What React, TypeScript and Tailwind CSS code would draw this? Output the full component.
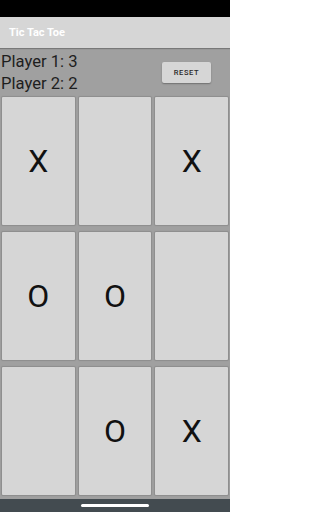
import React, { useState } from 'react'

type Mark = 'X' | 'O' | ''

const App: React.FC = () => {
  const [board, setBoard] = useState<Mark[]>(['X', '', 'X', 'O', 'O', '', '', 'O', 'X'])
  const [scores] = useState({ p1: 3, p2: 2 })

  return (
    <div className="w-[230px] h-[512px] flex flex-col bg-[#a0a0a0] font-['Roboto',sans-serif] overflow-hidden">
      <div className="h-[17px] bg-black shrink-0" />
      <div className="h-[31px] shrink-0 bg-[#d6d6d6] flex items-center pl-[9px] shadow-[0_1px_1px_rgba(0,0,0,0.25)] relative z-10">
        <span className="text-white text-[11px] font-bold leading-none">Tic Tac Toe</span>
      </div>

      <div className="h-[49px] shrink-0 flex items-center justify-between pl-[1px] pr-[19px]">
        <div className="flex flex-col pt-[1px] text-[16.6px] leading-[22px] text-[#1e1e1e]">
          <span>Player 1: {scores.p1}</span>
          <span>Player 2: {scores.p2}</span>
        </div>
        <button
          className="w-[49px] h-[21px] rounded-[2px] bg-[#d6d6d6] shadow-[0_1px_1.5px_rgba(0,0,0,0.3)] text-[7.5px] font-medium tracking-[0.6px] text-[#2a2a2a] flex items-center justify-center"
          onClick={() => setBoard(Array(9).fill('') as Mark[])}
        >
          RESET
        </button>
      </div>

      <div className="grid grid-cols-3 grid-rows-[128px_128px_128px] gap-x-[4px] gap-y-[7px] px-[2px] shrink-0">
        {board.map((cell, i) => (
          <div
            key={i}
            className="bg-[#d6d6d6] rounded-[1px] shadow-[0_0_1px_1px_rgba(0,0,0,0.12)] flex items-center justify-center text-[32px] text-[#111] leading-none"
          >
            {cell}
          </div>
        ))}
      </div>

      <div className="flex-1" />
      <div className="h-[13px] shrink-0 bg-[#434b50] flex items-center justify-center">
        <div className="w-[68px] h-[3px] rounded-full bg-white" />
      </div>
    </div>
  )
}

export default App
